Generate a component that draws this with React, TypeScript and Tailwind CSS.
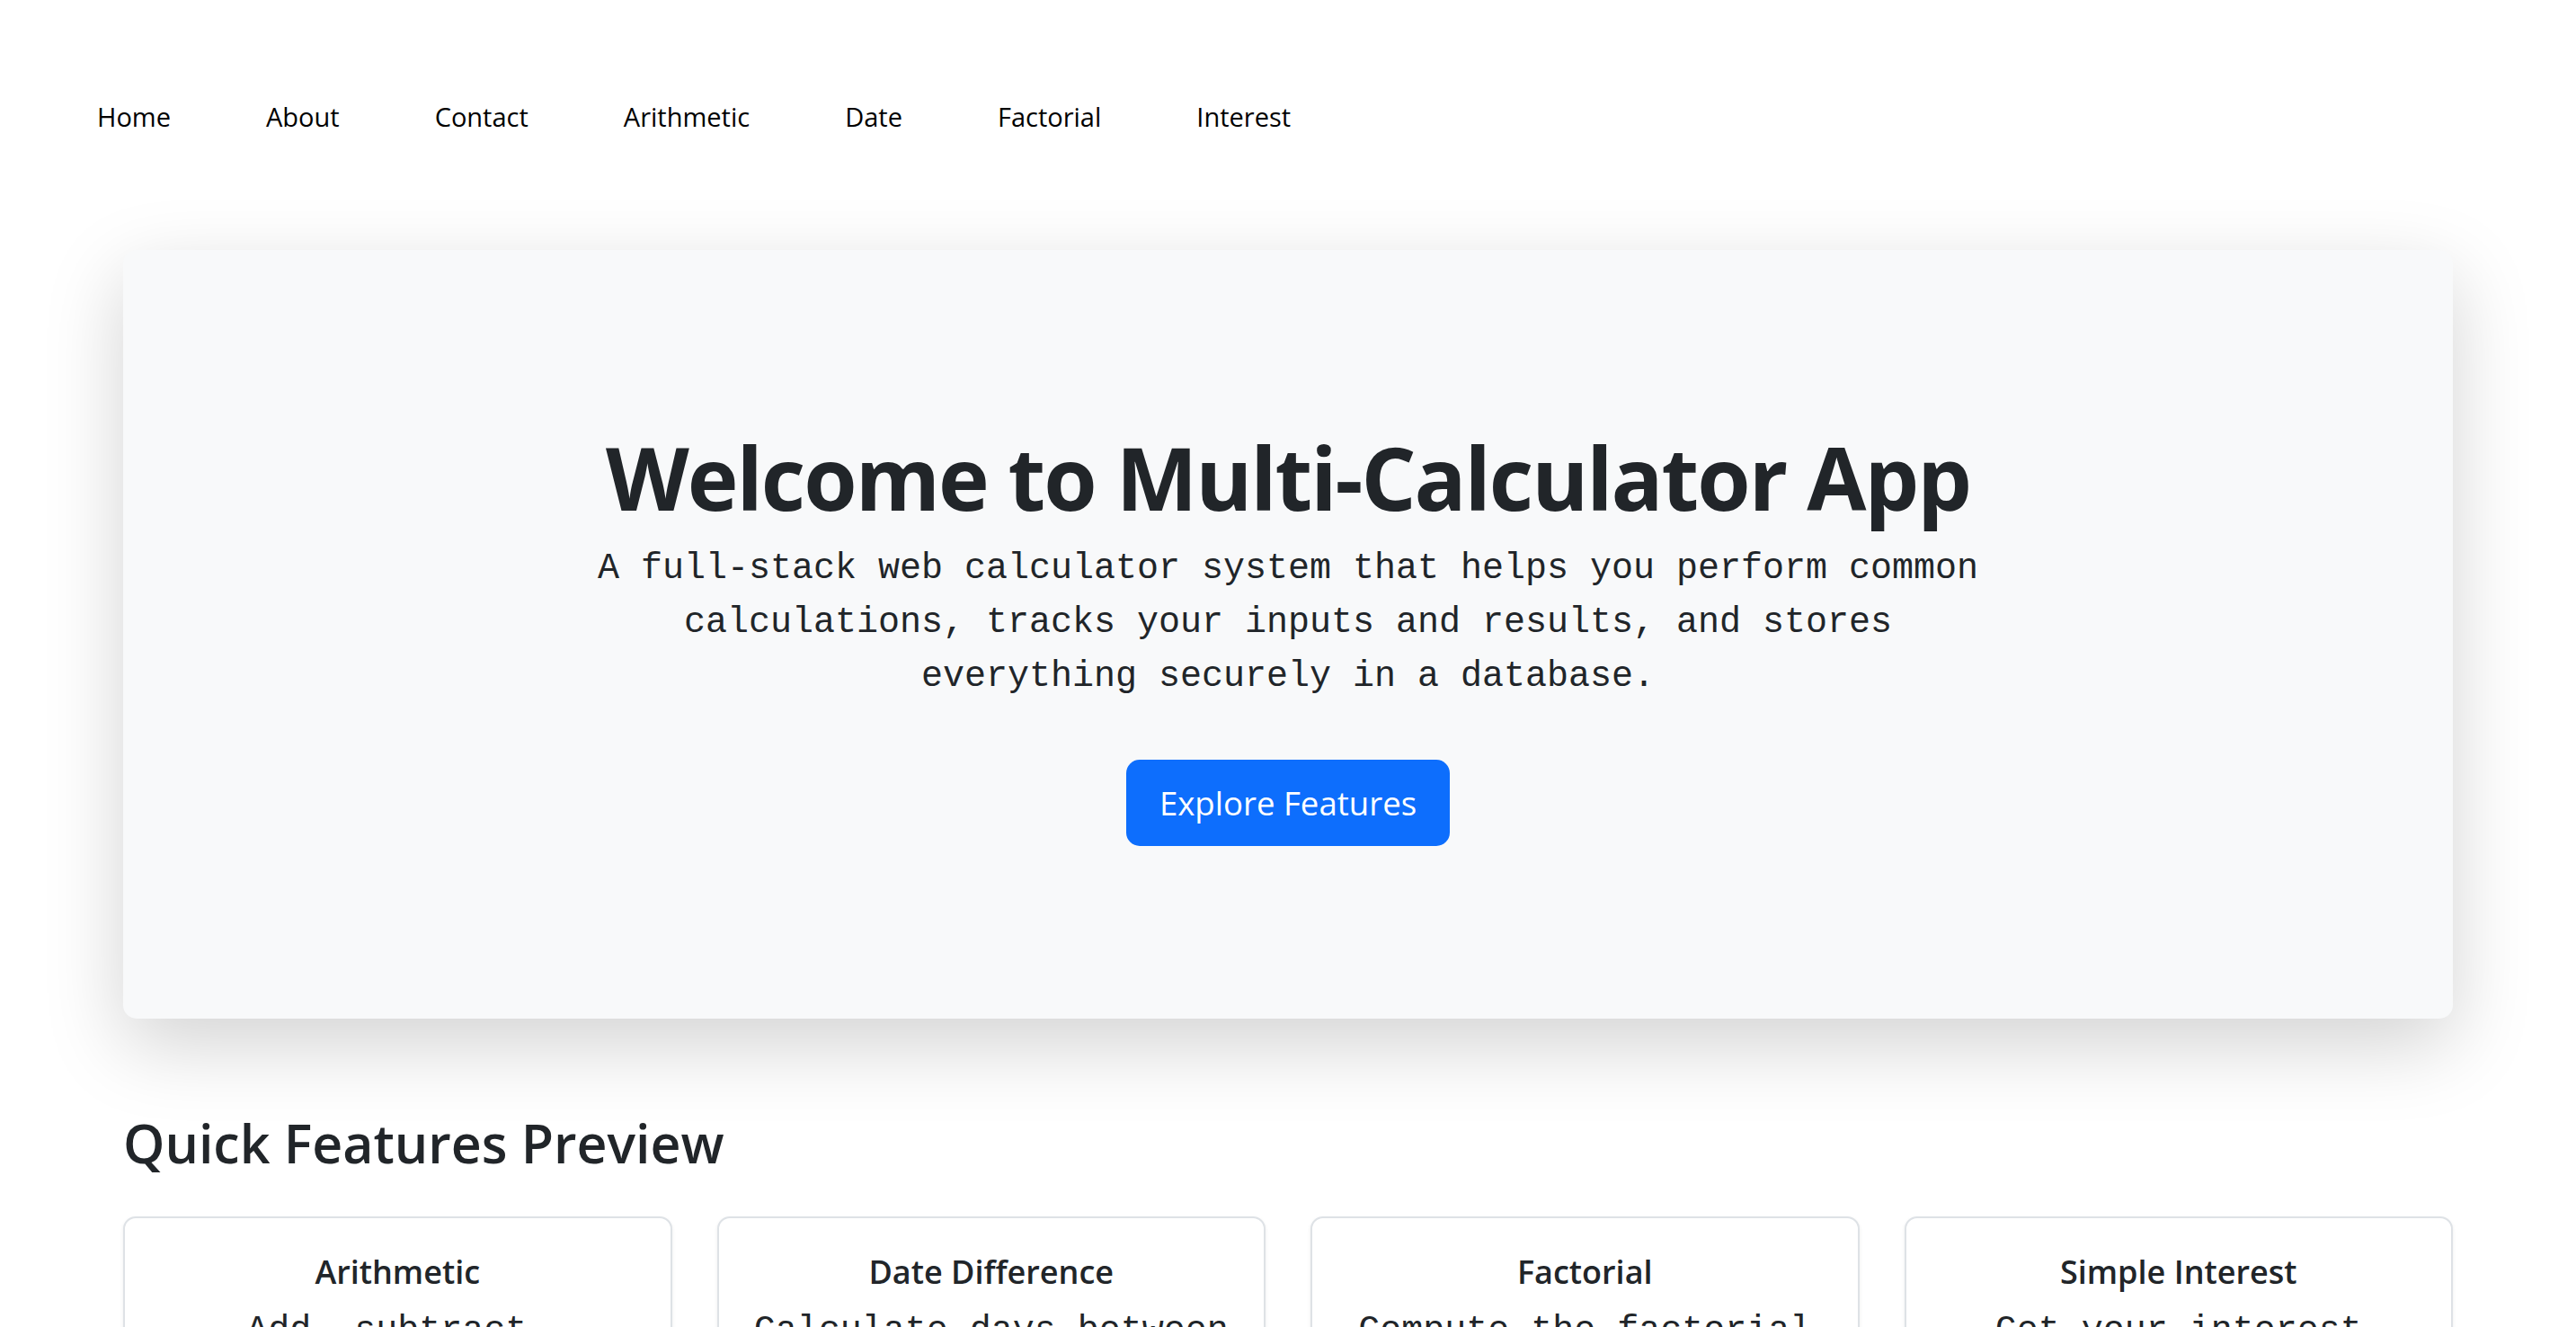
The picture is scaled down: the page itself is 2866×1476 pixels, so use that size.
import React from "react";

const navLinks = ["Home", "About", "Contact", "Arithmetic", "Date", "Factorial", "Interest"];

const features = [
  { title: "Arithmetic", text: "Add, subtract, multiply, or divide two numbers instantly." },
  { title: "Date Difference", text: "Calculate days between any two dates you choose." },
  { title: "Factorial", text: "Compute the factorial of any whole number." },
  { title: "Simple Interest", text: "Get your interest amount from principal, rate and time." },
];

const App: React.FC = () => {
  return (
    <div className="min-h-screen bg-white font-['Open_Sans',sans-serif] text-[#212529]">
      {/* Top navigation */}
      <nav className="flex gap-[106px] pl-[108px] pt-[108px]">
        {navLinks.map((link) => (
          <a key={link} href="#" className="text-[29px] leading-[44px] text-black no-underline">
            {link}
          </a>
        ))}
      </nav>

      <main className="px-[137px]">
        {/* Hero */}
        <section className="mt-[126px] rounded-[15px] bg-[#f8f9fa] pb-[192px] pt-[193px] text-center shadow-[0_29px_88px_rgba(0,0,0,0.175)]">
          <h1 className="text-[96px] font-bold leading-[1.25] tracking-[-2px]">Welcome to Multi-Calculator App</h1>
          <p className="mx-auto mt-[12px] max-w-[1560px] font-['Liberation_Mono',monospace] text-[40px] leading-[60px] text-[#212529]">
            A full-stack web calculator system that helps you perform common calculations, tracks your
            inputs and results, and stores everything securely in a database.
          </p>
          <button className="mt-[62px] h-[96px] rounded-[15px] bg-[#0d6efd] px-[37px] text-[36.6px] leading-[1.5] text-white">
            Explore Features
          </button>
        </section>

        {/* Features preview */}
        <section className="mt-[103px]">
          <h2 className="text-[59px] font-semibold leading-[1.2]">Quick Features Preview</h2>
          <div className="mt-[46px] grid grid-cols-4 gap-[50px]">
            {features.map((f) => (
              <div
                key={f.title}
                className="rounded-[14px] border-2 border-[#dee2e6] bg-white px-[29px] pb-[33px] pt-[38px] text-center shadow-[0_2px_4px_rgba(0,0,0,0.075)]"
              >
                <h5 className="mb-[15px] text-[36px] font-semibold leading-[1.2]">{f.title}</h5>
                <p className="font-['Liberation_Mono',monospace] text-[40px] leading-[60px]">{f.text}</p>
              </div>
            ))}
          </div>
        </section>
      </main>
    </div>
  );
};

export default App;
